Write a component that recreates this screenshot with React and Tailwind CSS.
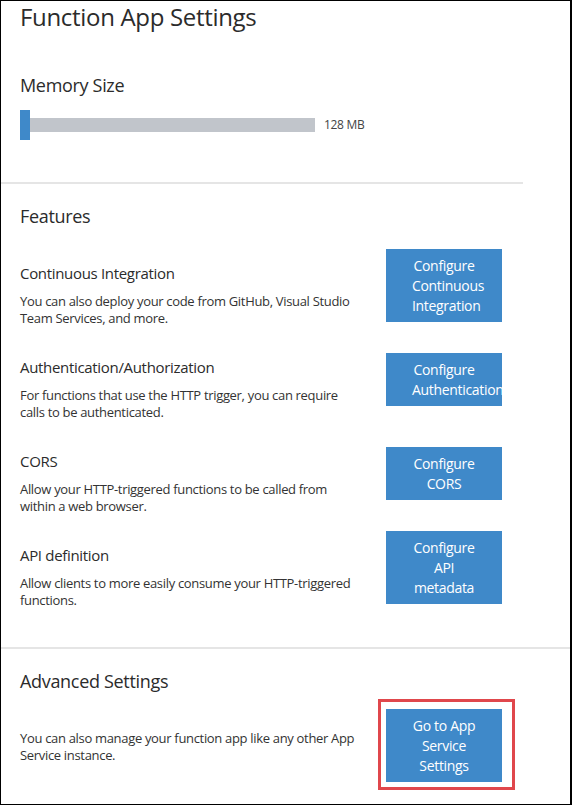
import React from 'react';

const features = [
  {
    title: 'Continuous Integration',
    desc: 'You can also deploy your code from GitHub, Visual Studio Team Services, and more.',
    button: ['Configure', 'Continuous', 'Integration'],
  },
  {
    title: 'Authentication/Authorization',
    desc: 'For functions that use the HTTP trigger, you can require calls to be authenticated.',
    button: ['Configure', 'Authentication'],
  },
  {
    title: 'CORS',
    desc: 'Allow your HTTP-triggered functions to be called from within a web browser.',
    button: ['Configure', 'CORS'],
  },
  {
    title: 'API definition',
    desc: 'Allow clients to more easily consume your HTTP-triggered functions.',
    button: ['Configure', 'API', 'metadata'],
  },
];

const BlueButton = ({ lines }) => (
  <div className="w-[116px] shrink-0 overflow-hidden bg-[#3f89c9] px-[26px] pt-[7px] pb-[6px] text-center text-[14px] leading-[20px] text-white">
    {lines.map((line, i) => (
      <div key={i} className="whitespace-nowrap">{line}</div>
    ))}
  </div>
);

const App = () => {
  return (
    <div className="h-[805px] w-[572px] overflow-hidden border border-r-2 border-black bg-white font-['Open_Sans',sans-serif] tracking-[-0.02em] text-[#2b2b2b]">
      {/* Memory */}
      <section className="w-[522px] border-b-2 border-[#e5e5e5] pl-[19px] pb-[42px]">
        <h1 className="text-[24px] leading-[32px]">Function App Settings</h1>
        <h2 className="mt-[40px] text-[18px] leading-[24px]">Memory Size</h2>
        <div className="mt-[13px] flex items-center">
          <div className="h-[30px] w-[10px] bg-[#3f89c9]" />
          <div className="h-[14px] w-[285px] bg-[#c1c5cb]" />
          <span className="ml-[9px] text-[12px] text-[#444]">128 MB</span>
        </div>
      </section>

      {/* Features */}
      <section className="border-b-2 border-[#e5e5e5] pl-[19px] pt-[20px] pb-[38px]">
        <h2 className="text-[18px] leading-[24px]">Features</h2>
        <div className="mt-[15px] flex flex-col gap-[10px]">
          {features.map((f) => (
            <div key={f.title} className="flex items-center">
              <div className="w-[366px] shrink-0 pt-[20px]">
                <div className="text-[15px] leading-[20px]">{f.title}</div>
                <p className="mt-[10px] w-[336px] text-[13px] leading-[17px] text-[#333]">{f.desc}</p>
              </div>
              <BlueButton lines={f.button} />
            </div>
          ))}
        </div>
      </section>

      {/* Advanced */}
      <section className="pl-[19px] pt-[20px]">
        <h2 className="text-[18px] leading-[24px]">Advanced Settings</h2>
        <div className="mt-[6px] flex items-center">
          <p className="w-[358px] shrink-0 pt-[4px] pr-[8px] text-[13px] leading-[17px] text-[#333]">
            You can also manage your function app like any other App Service instance.
          </p>
          <div className="border-[3px] border-[#e0474c] pt-[7px] pr-[10px] pb-[5px] pl-[5px]">
            <BlueButton lines={['Go to App', 'Service', 'Settings']} />
          </div>
        </div>
      </section>
    </div>
  );
};

export default App;
